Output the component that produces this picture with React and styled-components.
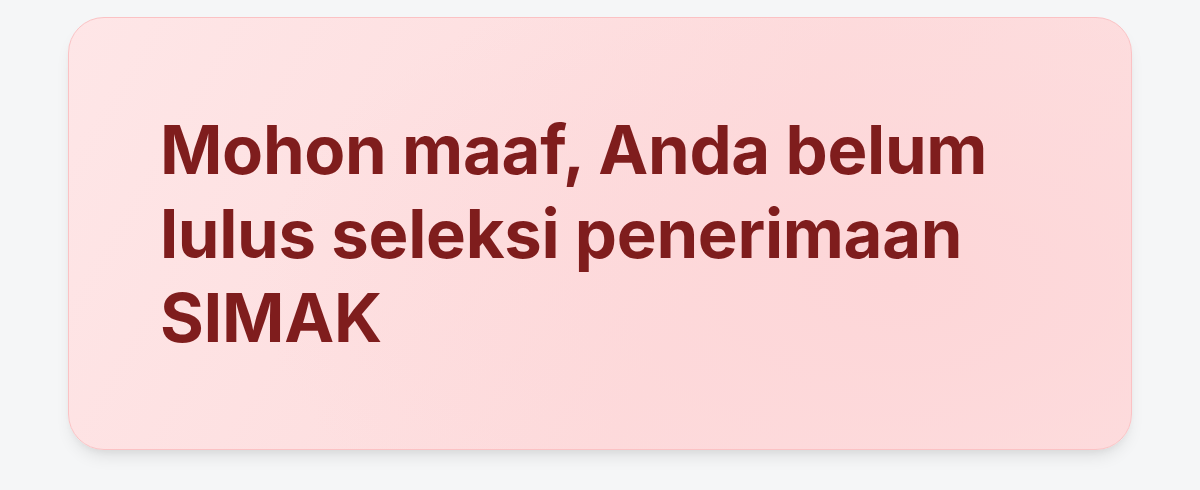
import styled, { createGlobalStyle } from "styled-components";

const GlobalStyle = createGlobalStyle`
  html, body {
    margin: 0;
    padding: 0;
    background-color: #f5f6f7;
    font-family: Inter, "Noto Sans", sans-serif;
  }
`;

const Page = styled.div`
  box-sizing: border-box;
  width: 1200px;
  height: 490px;
  padding: 17px 68px 0 68px;
  background-color: #f5f6f7;
`;

const Card = styled.div`
  box-sizing: border-box;
  width: 1064px;
  padding: 90px 91px 89px 91px;
  border: 1.5px solid #fbc2c4;
  border-radius: 36px;
  background: radial-gradient(
      ellipse 60% 80% at 78% 62%,
      #fdd6d8 0%,
      rgba(253, 214, 216, 0) 100%
    ),
    linear-gradient(120deg, #fee6e7 0%, #fddcdd 60%, #fddfe0 100%);
  box-shadow: 0 10px 18px -6px rgba(0, 0, 0, 0.12),
    0 4px 8px -4px rgba(0, 0, 0, 0.06);
`;

const Message = styled.h2`
  margin: 0;
  font-family: Inter, "Noto Sans", sans-serif;
  font-size: 67px;
  line-height: 84px;
  font-weight: 700;
  letter-spacing: -0.3px;
  color: #7f1d1d;
`;

const App = () => {
  return (
    <>
      <GlobalStyle />
      <Page>
        <Card>
          <Message>Mohon maaf, Anda belum lulus seleksi penerimaan SIMAK</Message>
        </Card>
      </Page>
    </>
  );
};

export default App;
